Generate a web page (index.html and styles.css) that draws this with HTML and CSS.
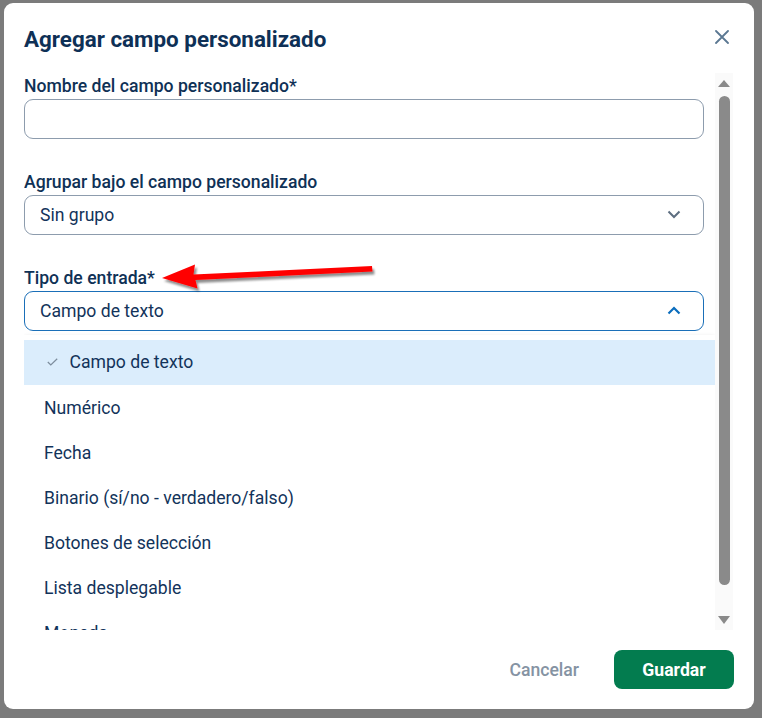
FILE: index.html
```html
<!DOCTYPE html>
<html lang="es">
<head>
<meta charset="utf-8">
<title>Agregar campo personalizado</title>
<link rel="stylesheet" href="styles.css">
</head>
<body>
<div class="modal">
  <div class="header">
    <h2 class="title">Agregar campo personalizado</h2>
    <button class="close" aria-label="Cerrar">
      <svg width="14" height="14" viewBox="0 0 14 14"><path d="M1 1 L13 13 M13 1 L1 13" stroke="#5b7892" stroke-width="1.8" stroke-linecap="round" fill="none"/></svg>
    </button>
  </div>
  <div class="body">
    <div class="content">
      <div class="field">
        <div class="label">Nombre del campo personalizado*</div>
        <div class="input"></div>
      </div>
      <div class="field">
        <div class="label">Agrupar bajo el campo personalizado</div>
        <div class="input select">
          <span class="value">Sin grupo</span>
          <svg class="chev" width="14" height="9" viewBox="0 0 14 9"><path d="M1.5 1.5 L7 7 L12.5 1.5" stroke="#5d6e80" stroke-width="2" fill="none"/></svg>
        </div>
      </div>
      <div class="field">
        <div class="label">Tipo de entrada*</div>
        <div class="input select open">
          <span class="value">Campo de texto</span>
          <svg class="chev" width="14" height="9" viewBox="0 0 14 9"><path d="M1.5 7.5 L7 2 L12.5 7.5" stroke="#0b6dbd" stroke-width="2.2" fill="none"/></svg>
        </div>
      </div>
      <ul class="list">
        <li class="item selected">
          <svg class="check" width="11" height="8" viewBox="0 0 11 8"><path d="M0.8 4 L3.8 7 L10.2 0.8" stroke="#7d8d9d" stroke-width="1.2" fill="none"/></svg>
          <span>Campo de texto</span>
        </li>
        <li class="item">Numérico</li>
        <li class="item">Fecha</li>
        <li class="item">Binario (sí/no - verdadero/falso)</li>
        <li class="item">Botones de selección</li>
        <li class="item">Lista desplegable</li>
        <li class="item">Moneda</li>
        <li class="item">Porcentaje</li>
      </ul>
    </div>
    <div class="scrollbar">
      <div class="arrow up"></div>
      <div class="thumb"></div>
      <div class="spacer"></div>
      <div class="arrow down"></div>
    </div>
  </div>
  <div class="footer">
    <button class="cancel">Cancelar</button>
    <button class="save">Guardar</button>
  </div>
</div>
<svg class="annotation" width="762" height="718" viewBox="0 0 762 718">
  <defs>
    <filter id="sh" x="-10%" y="-50%" width="120%" height="200%">
      <feGaussianBlur in="SourceAlpha" stdDeviation="1.3"/>
      <feOffset dx="2" dy="2.5" result="b"/>
      <feComponentTransfer><feFuncA type="linear" slope="0.45"/></feComponentTransfer>
      <feMerge><feMergeNode/><feMergeNode in="SourceGraphic"/></feMerge>
    </filter>
  </defs>
  <polygon filter="url(#sh)" fill="#ff0000" points="162,278 195,264.5 193.5,274.5 372,266 372.5,271.5 195.5,280 197.5,288.5"/>
</svg>
</body>
</html>
```
FILE: styles.css
```css
* { box-sizing: border-box; }
html, body { margin: 0; }
body {
  width: 762px;
  height: 718px;
  padding: 3px 8px 9px 4px;
  background: #7b7b7b;
  font-family: Roboto, "Noto Sans", sans-serif;
  color: #0f3156;
  position: relative;
  overflow: hidden;
}
.modal {
  width: 750px;
  height: 706px;
  background: #fff;
  border-radius: 9px;
  display: flex;
  flex-direction: column;
}
.header {
  display: flex;
  justify-content: space-between;
  align-items: flex-start;
  padding: 22.5px 25px 21px 20px;
}
.title {
  margin: 0;
  font-size: 22.4px;
  line-height: 26px;
  font-weight: 700;
  color: #0e3056;
}
.close {
  margin-top: 4.5px;
  padding: 0;
  border: 0;
  background: none;
  width: 14px;
  height: 14px;
  display: flex;
}
.body {
  flex: 1;
  display: flex;
  padding-left: 20px;
  padding-right: 21px;
  min-height: 0;
}
.content {
  flex: 1;
  overflow: hidden;
  padding-top: 3.5px;
}
.field { width: 680px; margin-bottom: 33.5px; }
.field:last-of-type { margin-bottom: 0; }
.label {
  font-size: 17.6px;
  line-height: 20px;
  font-weight: 500;
  color: #0f3156;
  margin-bottom: 2.5px;
}
.input {
  height: 40px;
  border: 1px solid #8d9cad;
  border-radius: 9px;
  background: #fff;
}
.select {
  display: flex;
  align-items: center;
  justify-content: space-between;
  padding: 0 22px 0 15px;
}
.select.open { border-color: #1a6fb8; }
.value { font-size: 17.6px; color: #12335a; }
.chev { display: block; }
.list {
  list-style: none;
  margin: 4px 0 0;
  padding: 5px 0 0;
  background: #fff;
  box-shadow: 0 1px 4px rgba(0, 0, 0, 0.1);
}
.item {
  height: 45px;
  line-height: 46px;
  padding-left: 20px;
  font-size: 17.6px;
  color: #12335a;
}
.item.selected {
  background: #dbedfc;
  display: flex;
  align-items: center;
  padding-left: 23px;
}
.check { margin-right: 11.5px; }
.scrollbar {
  width: 18px;
  background: #fafafa;
  display: flex;
  flex-direction: column;
  align-items: center;
  padding: 7px 0 6px;
}
.arrow {
  width: 0;
  height: 0;
  border-left: 6px solid transparent;
  border-right: 6px solid transparent;
}
.arrow.up { border-bottom: 7px solid #8a8a8a; }
.arrow.down { border-top: 8px solid #8a8a8a; }
.thumb {
  margin-top: 9px;
  width: 11px;
  height: 489px;
  border-radius: 6px;
  background: #8a8a8a;
}
.spacer { flex: 1; }
.footer {
  display: flex;
  justify-content: flex-end;
  align-items: center;
  padding: 20px 20px 20px;
}
.cancel {
  border: 0;
  background: none;
  padding: 0;
  margin-right: 35px;
  font-family: inherit;
  font-size: 17.6px;
  font-weight: 500;
  color: #8593a3;
}
.save {
  width: 120px;
  height: 39px;
  border: 0;
  border-radius: 8px;
  background: #037c4f;
  color: #fff;
  font-family: inherit;
  font-size: 17.6px;
  font-weight: 700;
}
.annotation {
  position: absolute;
  left: 0;
  top: 0;
  pointer-events: none;
}
```
